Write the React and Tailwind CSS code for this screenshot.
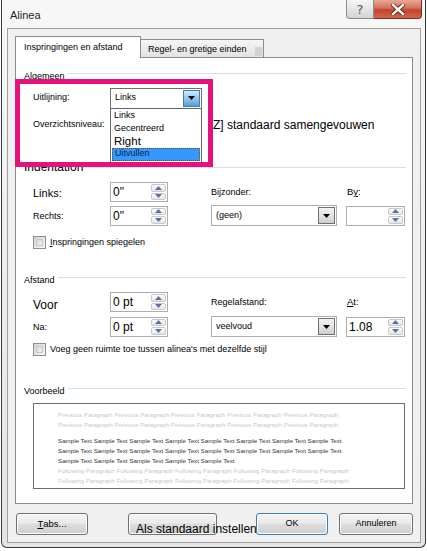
// Alinea paragraph dialog (Windows 7 style)

function SpinBtn({ up }) {
  return (
    <div className="flex-1 border border-[#c9c9c9] rounded-[2px] bg-gradient-to-b from-[#fcfcfc] to-[#e6e6e6] flex items-center justify-center">
      <svg width="7" height="4" viewBox="0 0 7 4">
        <path d={up ? "M0 4L3.5 0L7 4Z" : "M0 0H7L3.5 4Z"} fill="#5b6fa6" />
      </svg>
    </div>
  )
}

function Spin({ value, width = "w-[58px]" }) {
  return (
    <div className={`${width} h-[20px] border border-[#abadb3] bg-white flex`}>
      <div className="flex-1 flex items-center pl-[2px] text-[12px] leading-none">{value}</div>
      <div className="w-[16px] flex flex-col gap-px py-px pr-px">
        <SpinBtn up />
        <SpinBtn />
      </div>
    </div>
  )
}

function Arrow() {
  return (
    <svg width="7" height="4" viewBox="0 0 7 4">
      <path d="M0 0H7L3.5 4Z" fill="#000" />
    </svg>
  )
}

function Select({ value, width, active }) {
  return (
    <div
      className={`${width} h-[21px] border bg-white flex ${active ? "border-[#6f6f6f]" : "border-[#abadb3]"}`}
    >
      <div className="flex-1 flex items-center pl-[4px]">{value}</div>
      <div
        className={`w-[17px] m-px border flex items-center justify-center ${
          active
            ? "border-[#3c7fb1] bg-gradient-to-b from-[#d0ebfb] via-[#8fc6ee] to-[#5a9fd6]"
            : "border-[#707070] bg-gradient-to-b from-[#f3f3f3] via-[#e3e3e3] to-[#cdcdcd]"
        }`}
      >
        <Arrow />
      </div>
    </div>
  )
}

function CheckBox({ children, className = "" }) {
  return (
    <div className={`flex items-center h-[13px] pl-[17px] ${className}`}>
      <div className="w-[13px] h-[13px] border border-[#8f8f8f] bg-gradient-to-br from-[#d3d3d3] to-[#f8f8f8] p-[2px]">
        <div className="w-full h-full border border-[#c6c6c6]" />
      </div>
      <span className="ml-[4px]">{children}</span>
    </div>
  )
}

function GroupHeader({ label, className = "" }) {
  return (
    <div className={`flex items-start h-[11px] ml-[8px] mr-[6px] ${className}`}>
      <span className="leading-[11px]">{label}</span>
      <div className="flex-1 h-px bg-[#d5dfe5] mt-[2px] ml-[3px]" />
    </div>
  )
}

function Btn({ children, className = "" }) {
  return (
    <div
      className={`h-[22px] border border-[#707070] rounded-[3px] bg-[linear-gradient(#f2f2f2,#ebebeb_45%,#dddddd_50%,#cfcfcf)] shadow-[inset_0_0_0_1px_#fbfbfb] flex items-center justify-center ${className}`}
    >
      {children}
    </div>
  )
}

const previous = Array(5).fill("Previous Paragraph").join(" ")
const following = Array(5).fill("Following Paragraph").join(" ")
const sampleLong = Array(8).fill("Sample Text").join(" ")
const sampleShort = Array(5).fill("Sample Text").join(" ")

export default function App() {
  return (
    <div className="relative w-[427px] h-[551px] bg-white overflow-hidden font-['Liberation_Sans',Arial,sans-serif] text-[9px] text-black">
      <div className="ml-[1px] w-[425px] h-[548px] border-x border-b border-[#3a3a3a] rounded-b-[6px] bg-gradient-to-b from-[#f7f7f7] to-[#e4e4e4] flex flex-col">
        {/* title bar */}
        <div className="h-[28px] shrink-0 flex items-start">
          <span className="ml-[8px] mt-[9px] text-[11px] leading-[13px] text-[#1e1e1e]">Alinea</span>
          <div className="ml-auto mr-[3px] flex">
            <div className="w-[28px] h-[19px] border border-[#8d8d8d] border-t-0 rounded-bl-[4px] bg-gradient-to-b from-[#f6f6f6] to-[#d4d4d4] flex items-center justify-center text-[13px] leading-none text-[#555] font-['DejaVu_Sans',sans-serif]">
              ?
            </div>
            <div className="w-[48px] h-[19px] border border-[#7a2e20] border-t-0 border-l-0 rounded-br-[4px] bg-[linear-gradient(#e9a797,#d4705a_45%,#c3442c_55%,#d1664c)] flex items-center justify-center">
              <svg width="14" height="11" viewBox="0 0 14 11">
                <path d="M2 1L12 10M12 1L2 10" stroke="#5a1f14" strokeWidth="4.2" strokeLinecap="square" />
                <path d="M2 1L12 10M12 1L2 10" stroke="#fff" strokeWidth="2.4" strokeLinecap="square" />
              </svg>
            </div>
          </div>
        </div>

        {/* client area */}
        <div className="ml-[5px] w-[414px] h-[515px] border border-[#a0a0a0] bg-[#f0f0f0] pl-[7px] pt-[7px] flex flex-col">
          {/* tabs */}
          <div className="flex items-end h-[21px] relative z-10">
            <div className="w-[126px] h-[22px] -mb-px border border-b-0 border-[#898c95] bg-white flex items-center pl-[8px] pt-[1px]">
              Inspringingen en afstand
            </div>
            <div className="w-[123px] h-[18px] border border-l-0 border-b-0 border-[#898c95] bg-gradient-to-b from-[#f5f5f5] to-[#e3e3e3] flex items-center pl-[7px] pt-[2px]">
              Regel- en gretige einden
              <div className="ml-auto mr-px mt-[3px] w-[7px] h-[9px] bg-[#d2d2d2]" />
            </div>
          </div>

          {/* tab panel */}
          <div className="w-[398px] h-[447px] border border-[#898c95] bg-white flex flex-col">
            <GroupHeader label="Algemeen" className="mt-[13px]" />

            <div className="flex items-center h-[20px] mt-[6px] pl-[17px]">
              <span className="w-[77px]">Uitlijning:</span>
              <div className="relative">
                <Select value="Links" width="w-[92px]" active />
                <div className="absolute left-0 top-[20px] w-[92px] h-[58px] border border-[#646464] bg-white pt-[1px] px-px z-10">
                  <div className="h-[13px] flex items-center pl-[2px]">Links</div>
                  <div className="h-[13px] flex items-center pl-[2px]">Gecentreerd</div>
                  <div className="h-[12px] flex items-center pl-[2px] text-[11.5px]">Right</div>
                  <div className="h-[13px] flex items-center pl-[2px] bg-[#3399ff] border border-dotted border-[#6b4a2a] text-[#0d2244]">
                    Uitvullen
                  </div>
                </div>
              </div>
            </div>

            <div className="flex items-center h-[20px] mt-[7px] pl-[17px]">
              <span className="w-[77px]">Overzichtsniveau:</span>
              <span className="ml-[103px] text-[12px] leading-none">Z] standaard samengevouwen</span>
            </div>

            <div className="flex items-start h-[14px] mt-[25px] ml-[8px] mr-[6px]">
              <span className="text-[12px] leading-[14px]">Indentation</span>
              <div className="flex-1 h-px bg-[#d5dfe5] mt-[7px] ml-[3px]" />
            </div>

            <div className="flex items-center h-[20px] mt-[8px] pl-[17px]">
              <span className="w-[77px] text-[11px] pt-[2px]">Links:</span>
              <Spin value={'0"'} />
              <span className="ml-[43px] w-[136px] pt-[2px]">Bijzonder:</span>
              <span className="text-[9.5px]">
                B<span className="underline">y</span>:
              </span>
            </div>

            <div className="flex items-center h-[21px] mt-[3px] pl-[17px]">
              <span className="w-[77px] pt-[2px]">Rechts:</span>
              <Spin value={'0"'} />
              <div className="ml-[43px]">
                <Select value="(geen)" width="w-[126px]" />
              </div>
              <div className="ml-[9px]">
                <Spin value="" width="w-[59px]" />
              </div>
            </div>

            <CheckBox className="mt-[10px]">
              <span className="underline">I</span>nspringingen spiegelen
            </CheckBox>

            <GroupHeader label="Afstand" className="mt-[26px]" />

            <div className="flex items-center h-[20px] mt-[6px] pl-[17px]">
              <span className="w-[77px] text-[12px] pt-[5px]">Voor</span>
              <Spin value="0 pt" />
              <span className="ml-[43px] w-[136px] pt-[2px]">Regelafstand:</span>
              <span className="text-[9.5px]">
                <span className="underline">A</span>t:
              </span>
            </div>

            <div className="flex items-center h-[21px] mt-[4px] pl-[17px]">
              <span className="w-[77px] pt-[3px]">Na:</span>
              <Spin value="0 pt" />
              <div className="ml-[43px]">
                <Select value="veelvoud" width="w-[126px]" />
              </div>
              <div className="ml-[9px]">
                <Spin value="1.08" width="w-[59px]" />
              </div>
            </div>

            <CheckBox className="mt-[6px]">Voeg geen ruimte toe tussen alinea's met dezelfde stijl</CheckBox>

            <GroupHeader label="Voorbeeld" className="mt-[30px]" />

            {/* preview */}
            <div className="ml-[17px] mt-[6px] w-[372px] h-[86px] border border-[#6d6d6d] bg-white pl-[24px] pt-[6px] text-[6.2px] leading-[10px] whitespace-nowrap overflow-hidden">
              <div className="text-[#c8c8c8]">{previous}</div>
              <div className="text-[#c8c8c8]">{previous}</div>
              <div className="mt-[6px] text-[#333]">{sampleLong}</div>
              <div className="text-[#333]">{sampleLong}</div>
              <div className="text-[#333]">{sampleShort}</div>
              <div className="text-[#c8c8c8]">{following}</div>
              <div className="text-[#c8c8c8]">{following}</div>
            </div>
          </div>

          {/* buttons */}
          <div className="flex mt-[9px]">
            <Btn className="ml-px w-[72px] text-[9.5px]">
              <span className="underline">T</span>abs...
            </Btn>
            <Btn className="ml-[40px] w-[89px] !justify-start pl-[7px] pt-[9px] text-[12px] whitespace-nowrap">
              Als standaard instellen
            </Btn>
            <Btn className="ml-[39px] w-[72px] !border-[#3c7fb1] shadow-[inset_0_0_0_1px_#8fd2f7,inset_0_0_0_2px_#c7e9fb]">
              OK
            </Btn>
            <Btn className="ml-[11px] w-[74px]">Annuleren</Btn>
          </div>
        </div>
      </div>

      {/* annotation frame */}
      <div className="absolute left-[15px] top-[79px] w-[198px] h-[88px] border-[5px] border-[#e5127d] z-20" />
    </div>
  )
}
